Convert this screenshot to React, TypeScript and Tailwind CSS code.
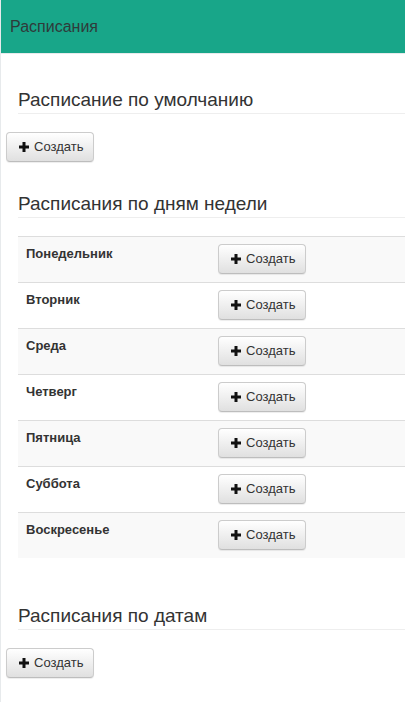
import React from 'react';

const days = ['Понедельник', 'Вторник', 'Среда', 'Четверг', 'Пятница', 'Суббота', 'Воскресенье'];

function PlusIcon() {
    return (
        <svg width="10" height="10" viewBox="0 0 10 10" className="shrink-0">
            <path d="M3.5 0h3v3.5H10v3H6.5V10h-3V6.5H0v-3h3.5z" fill="#111" />
        </svg>
    );
}

function CreateButton() {
    return (
        <button
            type="button"
            className="flex h-[30px] w-[88px] items-center gap-[5px] rounded-[4px] border border-[#ccc] border-b-[#bdbdbd] bg-gradient-to-b from-white to-[#e0e0e0] pl-[12px] text-[13px] text-[#333] shadow-[inset_0_1px_0_rgba(255,255,255,0.15),0_1px_1px_rgba(0,0,0,0.075)]"
        >
            <PlusIcon />
            <span>Создать</span>
        </button>
    );
}

function SectionTitle({ children, className }: { children: React.ReactNode; className: string }) {
    return (
        <h3 className={'ml-[12px] border-b border-[#eee] pb-[3px] text-[19px] leading-[20px] text-[#333] ' + className}>
            {children}
        </h3>
    );
}

export default function App() {
    return (
        <div className="min-h-screen border-l border-[#e7eaec] bg-white font-['Liberation_Sans',Arial,sans-serif]">
            <div className="flex h-[54px] items-center border-b border-[#e7eaec] bg-[#18a689] pl-[9px] text-[16px] text-[#2f3a3a]">
                Расписания
            </div>
            <div className="pl-[5px]">
                <SectionTitle className="mt-[36px]">Расписание по умолчанию</SectionTitle>
                <div className="mt-[18px]">
                    <CreateButton />
                </div>

                <SectionTitle className="mt-[32px]">Расписания по дням недели</SectionTitle>
                <div className="ml-[12px] mt-[18px] border-t border-[#ddd]">
                    {days.map((day, i) => (
                        <div
                            key={day}
                            className={
                                'grid grid-cols-[200px_1fr] ' +
                                (i % 2 === 0 ? 'bg-[#f9f9f9] ' : 'bg-white ') +
                                (i < days.length - 1 ? 'border-b border-[#ddd]' : '')
                            }
                        >
                            <div className="px-[8px] pt-[8px] text-[13px] font-bold leading-[18px] text-[#333]">{day}</div>
                            <div className="pb-[8px] pt-[7px]">
                                <CreateButton />
                            </div>
                        </div>
                    ))}
                </div>

                <SectionTitle className="mt-[48px]">Расписания по датам</SectionTitle>
                <div className="mt-[18px]">
                    <CreateButton />
                </div>
            </div>
        </div>
    );
}
